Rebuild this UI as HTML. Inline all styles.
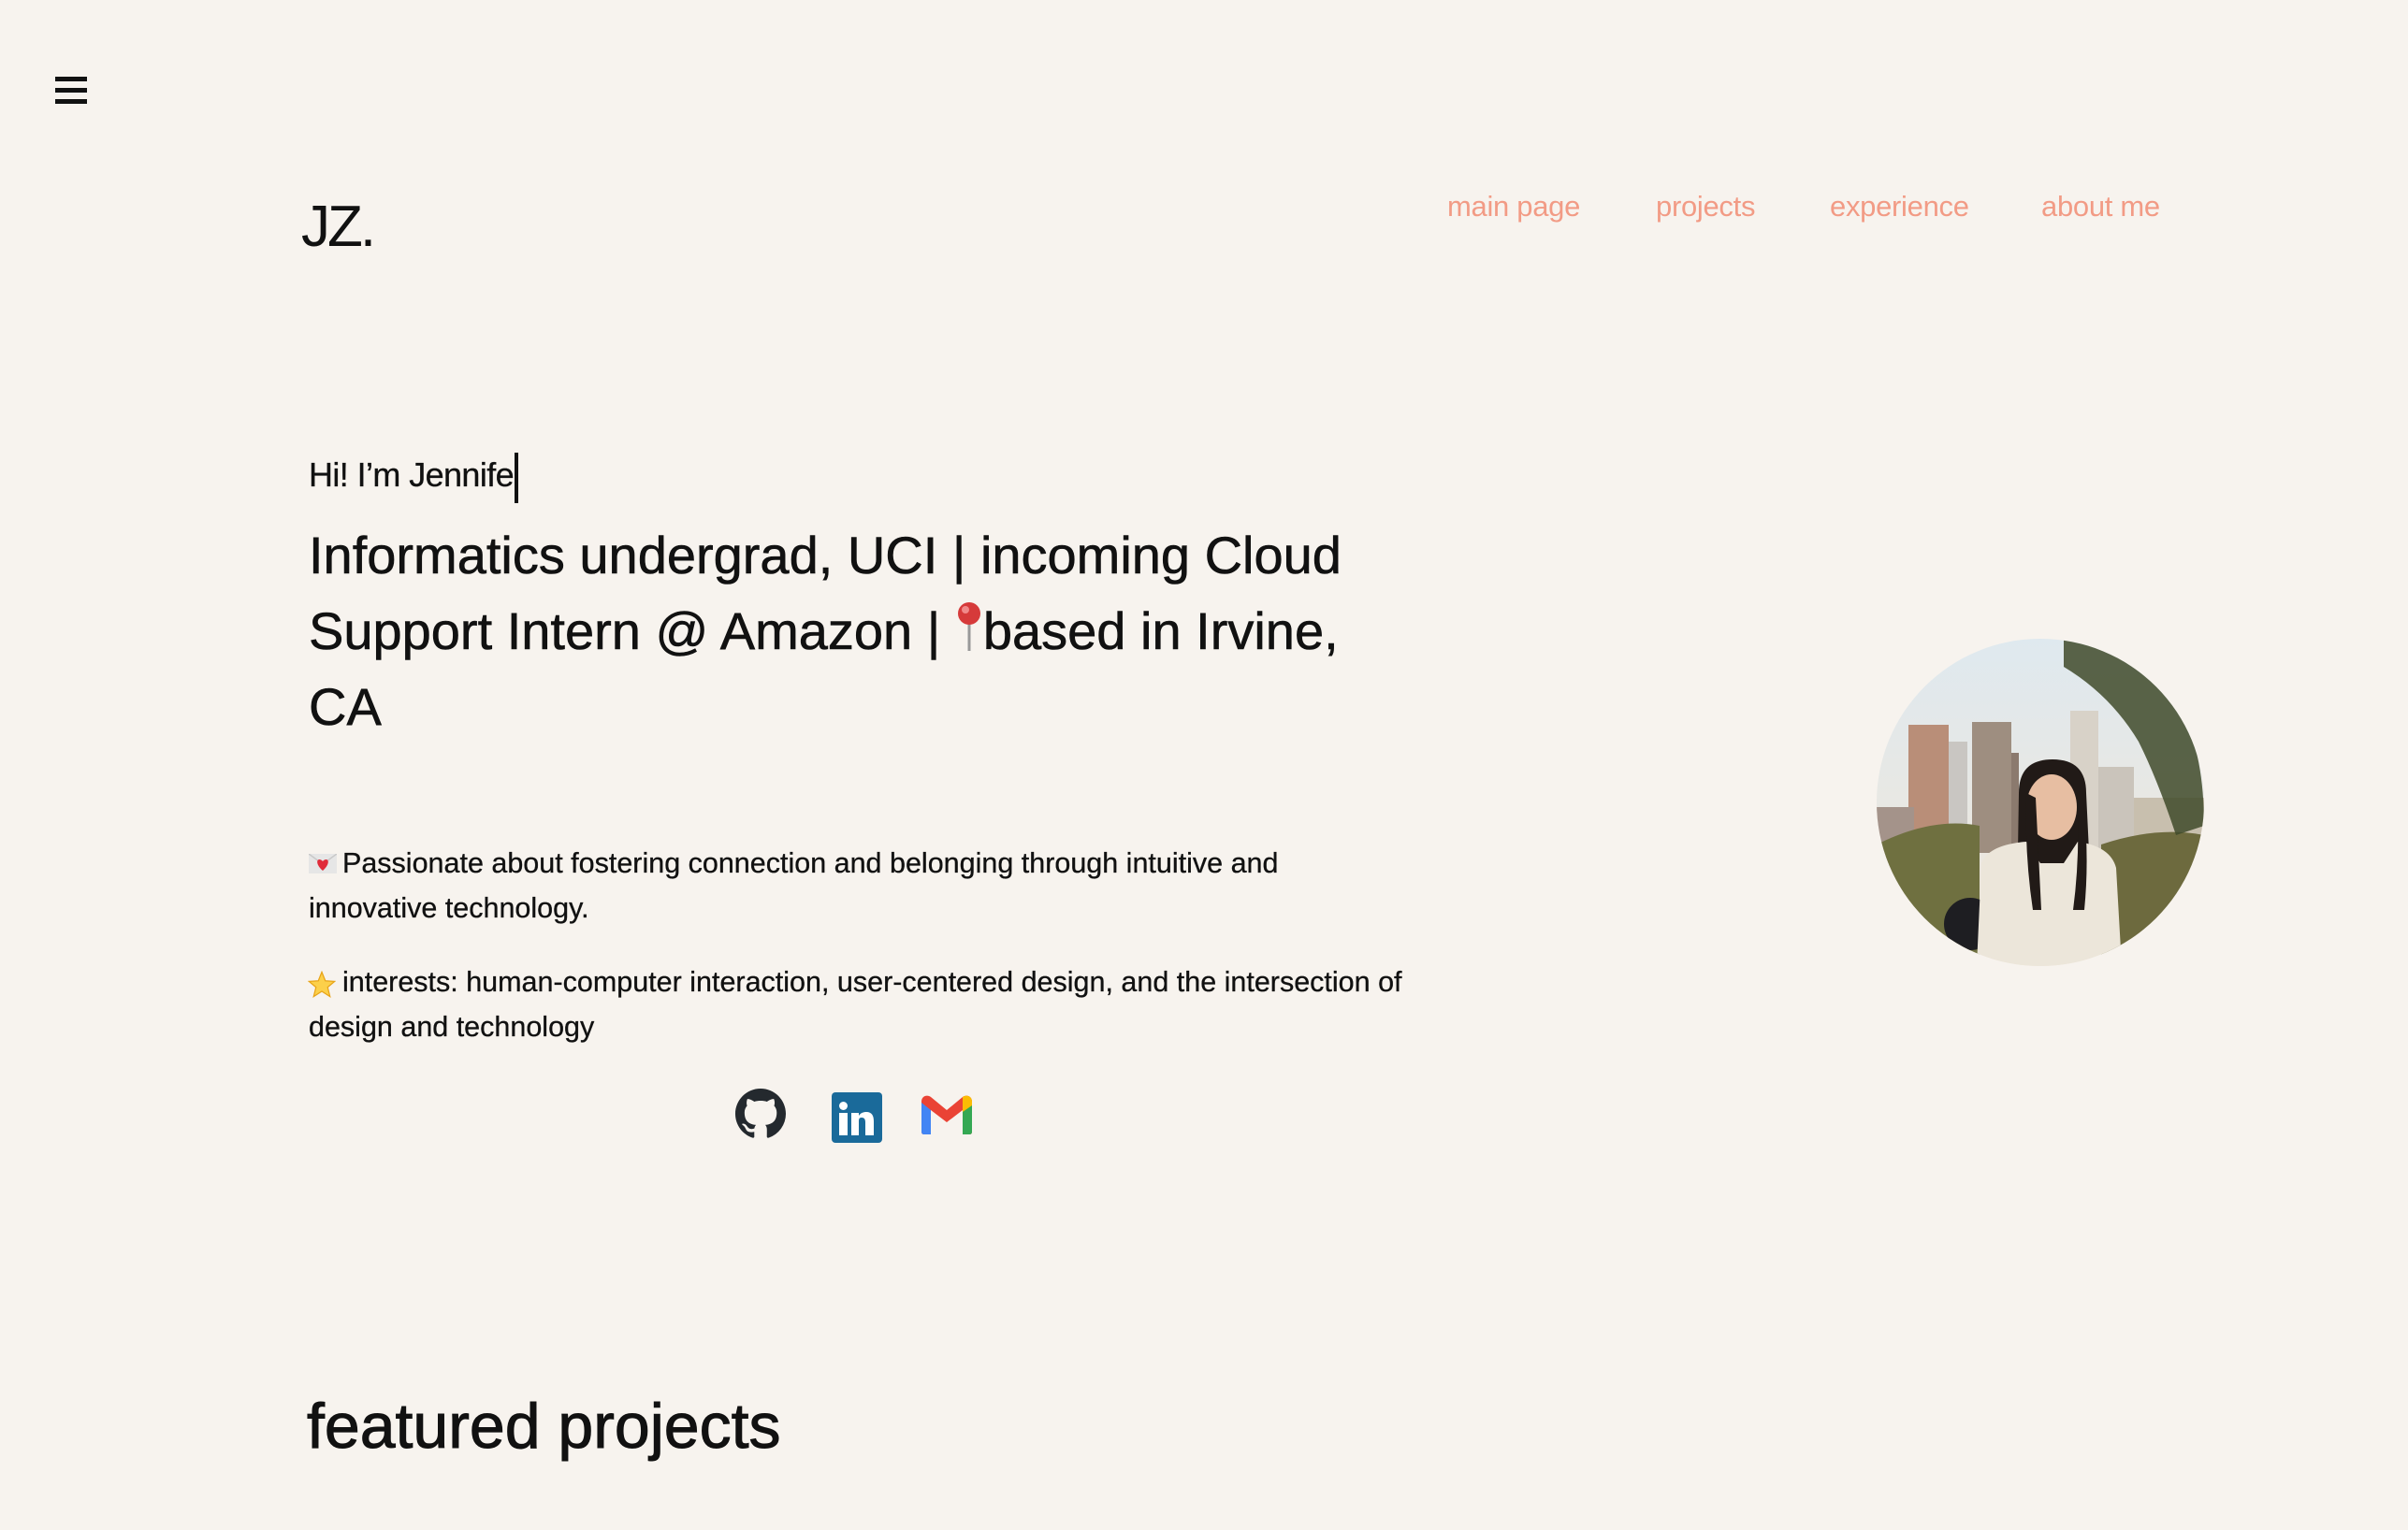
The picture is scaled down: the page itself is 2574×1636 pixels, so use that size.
<!DOCTYPE html>
<html><head><meta charset="utf-8"><style>
html,body{margin:0;padding:0;background:#f7f3ee;}
body{width:2574px;height:1636px;position:relative;overflow:hidden;font-family:"Liberation Sans",sans-serif;color:#111;}
.a{position:absolute;white-space:nowrap;}
.nav{top:203px;font-size:31px;color:#f29b85;letter-spacing:-0.3px;}
.p{font-size:30.5px;line-height:48px;letter-spacing:0;-webkit-text-stroke:0.3px #111;}
</style></head><body>
<svg class="a" style="left:59px;top:82px" width="34" height="30" viewBox="0 0 34 30"><rect x="0" y="0" width="34" height="5" fill="#111"/><rect x="0" y="12" width="34" height="5" fill="#111"/><rect x="0" y="24" width="34" height="5" fill="#111"/></svg>

<div class="a" style="left:322px;top:207px;font-size:62px;letter-spacing:-3px;">JZ.</div>

<div class="a nav" style="left:1547px">main page</div>
<div class="a nav" style="left:1770px">projects</div>
<div class="a nav" style="left:1956px">experience</div>
<div class="a nav" style="left:2182px">about me</div>

<div class="a" style="left:330px;top:487px;font-size:36px;letter-spacing:-0.6px;-webkit-text-stroke:0.3px #111;">Hi! I’m Jennife</div>
<div class="a" style="left:550px;top:484px;width:4px;height:54px;background:#111"></div>

<div class="a" style="left:330px;top:553px;font-size:56px;line-height:81px;letter-spacing:0;-webkit-text-stroke:0.6px #111;">Informatics undergrad, UCI | incoming Cloud<br>Support Intern @ Amazon | <svg width="30" height="56" viewBox="0 0 30 56" style="vertical-align:-4px"><line x1="15" y1="22" x2="15" y2="54" stroke="#999" stroke-width="3"/><circle cx="15" cy="14" r="12" fill="#d63a3a"/><circle cx="11" cy="10" r="4" fill="#f08a8a"/></svg>based in Irvine,<br>CA</div>

<svg class="a" style="left:330px;top:913px" width="30" height="21" viewBox="0 0 30 21"><rect width="30" height="21" fill="#e6e6e6"/><path d="M0 0L15 11L30 0" fill="none" stroke="#c8c8c8" stroke-width="1.5"/><path d="M15 18C8 12 8 6 11.5 6C13.5 6 15 8 15 8C15 8 16.5 6 18.5 6C22 6 22 12 15 18Z" fill="#e02b3a"/></svg>
<div class="a p" style="left:366px;top:899px;">Passionate about fostering connection and belonging through intuitive and</div>
<div class="a p" style="left:330px;top:947px;">innovative technology.</div>

<svg class="a" style="left:329px;top:1038px" width="30" height="29" viewBox="0 0 24 23"><path d="M12 1L15 8.5L23 9L17 14L19 22L12 17.5L5 22L7 14L1 9L9 8.5Z" fill="#fcd04a" stroke="#e8a418" stroke-width="1"/></svg>
<div class="a p" style="left:366px;top:1026px;">interests: human-computer interaction, user-centered design, and the intersection of</div>
<div class="a p" style="left:330px;top:1074px;">design and technology</div>

<svg class="a" style="left:785px;top:1164px" width="56" height="54" viewBox="0 0 16 16"><path fill="#24292e" d="M8 0C3.58 0 0 3.58 0 8c0 3.54 2.290 6.530 5.470 7.590.4.07.55-.17.55-.38 0-.19-.01-.82-.01-1.490-2.010.37-2.530-.49-2.690-.94-.09-.23-.48-.94-.82-1.130-.28-.15-.68-.52-.01-.53.63-.01 1.080.58 1.230.82.72 1.210 1.870.87 2.330.66.07-.52.28-.87.51-1.070-1.780-.2-3.640-.89-3.640-3.950 0-.87.31-1.590.82-2.150-.08-.2-.36-1.020.08-2.120 0 0 .67-.21 2.2.82.64-.18 1.320-.27 2-.27.68 0 1.360.09 2 .27 1.530-1.040 2.2-.82 2.2-.82.44 1.1.16 1.920.08 2.120.51.56.82 1.270.82 2.150 0 3.070-1.870 3.750-3.650 3.950.29.25.54.73.54 1.480 0 1.070-.01 1.930-.01 2.2 0 .21.15.46.55.38A8.013 8.013 0 0016 8c0-4.420-3.580-8-8-8z"/></svg>

<svg class="a" style="left:889px;top:1168px" width="54" height="54" viewBox="0 0 54 54"><rect width="54" height="54" rx="4" fill="#1a6a9a"/><rect x="8" y="10" width="9" height="9" rx="4.5" fill="#fff"/><rect x="8" y="22" width="9" height="24" fill="#fff"/><path d="M21 22h8v3c2-3 5-4 8-4 6 0 8 4 8 10v15h-9V32c0-3-1-5-4-5s-3 2-3 5v14h-8z" fill="#fff"/></svg>

<svg class="a" style="left:983px;top:1170px" width="58" height="44" viewBox="0 0 58 44"><path d="M2 8C2 2 8 0 12 3L29 17L46 3C50 0 56 2 56 8V40C56 42 55 43 53 43H46V17L29 30L12 17V43H5C3 43 2 42 2 40Z" fill="#ea4335"/><path d="M2 8V40C2 42 3 43 5 43H12V17L2 9Z" fill="#4285f4"/><path d="M46 17V43H53C55 43 56 42 56 40V9Z" fill="#34a853"/><path d="M46 3C50 0 56 2 56 8V12L46 19Z" fill="#fbbc04"/></svg>

<svg class="a" style="left:2006px;top:683px" width="350" height="350" viewBox="0 0 350 350">
<defs><clipPath id="c"><circle cx="175" cy="175" r="175"/></clipPath>
<linearGradient id="sky" x1="0" y1="0" x2="0" y2="1"><stop offset="0" stop-color="#dfe9ef"/><stop offset="1" stop-color="#f1e6d8"/></linearGradient></defs>
<g clip-path="url(#c)">
<rect width="350" height="350" fill="url(#sky)"/>
<rect x="34" y="92" width="43" height="130" fill="#b98e78"/>
<rect x="77" y="110" width="20" height="110" fill="#c9c6c2"/>
<rect x="102" y="89" width="42" height="140" fill="#9e8e80"/>
<rect x="144" y="122" width="8" height="100" fill="#8b7a6e"/>
<rect x="207" y="77" width="30" height="150" fill="#d8d2c8"/>
<rect x="237" y="137" width="38" height="100" fill="#cac4bb"/>
<rect x="0" y="180" width="40" height="60" fill="#a4938a"/>
<rect x="275" y="170" width="75" height="60" fill="#c8bfae"/>
<path d="M0 220 Q60 190 110 200 L110 350 L0 350Z" fill="#6f7040"/>
<path d="M240 220 Q300 200 350 210 L350 350 L240 350Z" fill="#6d6a3e"/>
<path d="M200 0 Q260 10 300 40 Q350 90 350 200 L320 210 Q300 150 280 110 Q250 60 200 30Z" fill="#3f4a2a" opacity=".85"/>
<circle cx="100" cy="305" r="28" fill="#1e1e22"/>
<path d="M152 165 Q152 129 188 129 Q224 129 224 165 L230 290 L150 290Z" fill="#211a17"/>
<ellipse cx="187" cy="180" rx="27" ry="35" fill="#e7bea2"/>
<path d="M107 350 L112 240 Q120 220 160 217 L175 240 L200 240 L215 217 Q250 222 256 245 L262 350Z" fill="#ece6da"/>
<path d="M160 165 Q158 230 167 290 L176 290 L170 170Z M214 165 Q218 230 210 290 L222 290 Q228 230 220 165Z" fill="#211a17"/>
</g></svg>

<div class="a" style="left:328px;top:1486px;font-size:68px;letter-spacing:0;-webkit-text-stroke:1px #111;">featured projects</div>
</body></html>
